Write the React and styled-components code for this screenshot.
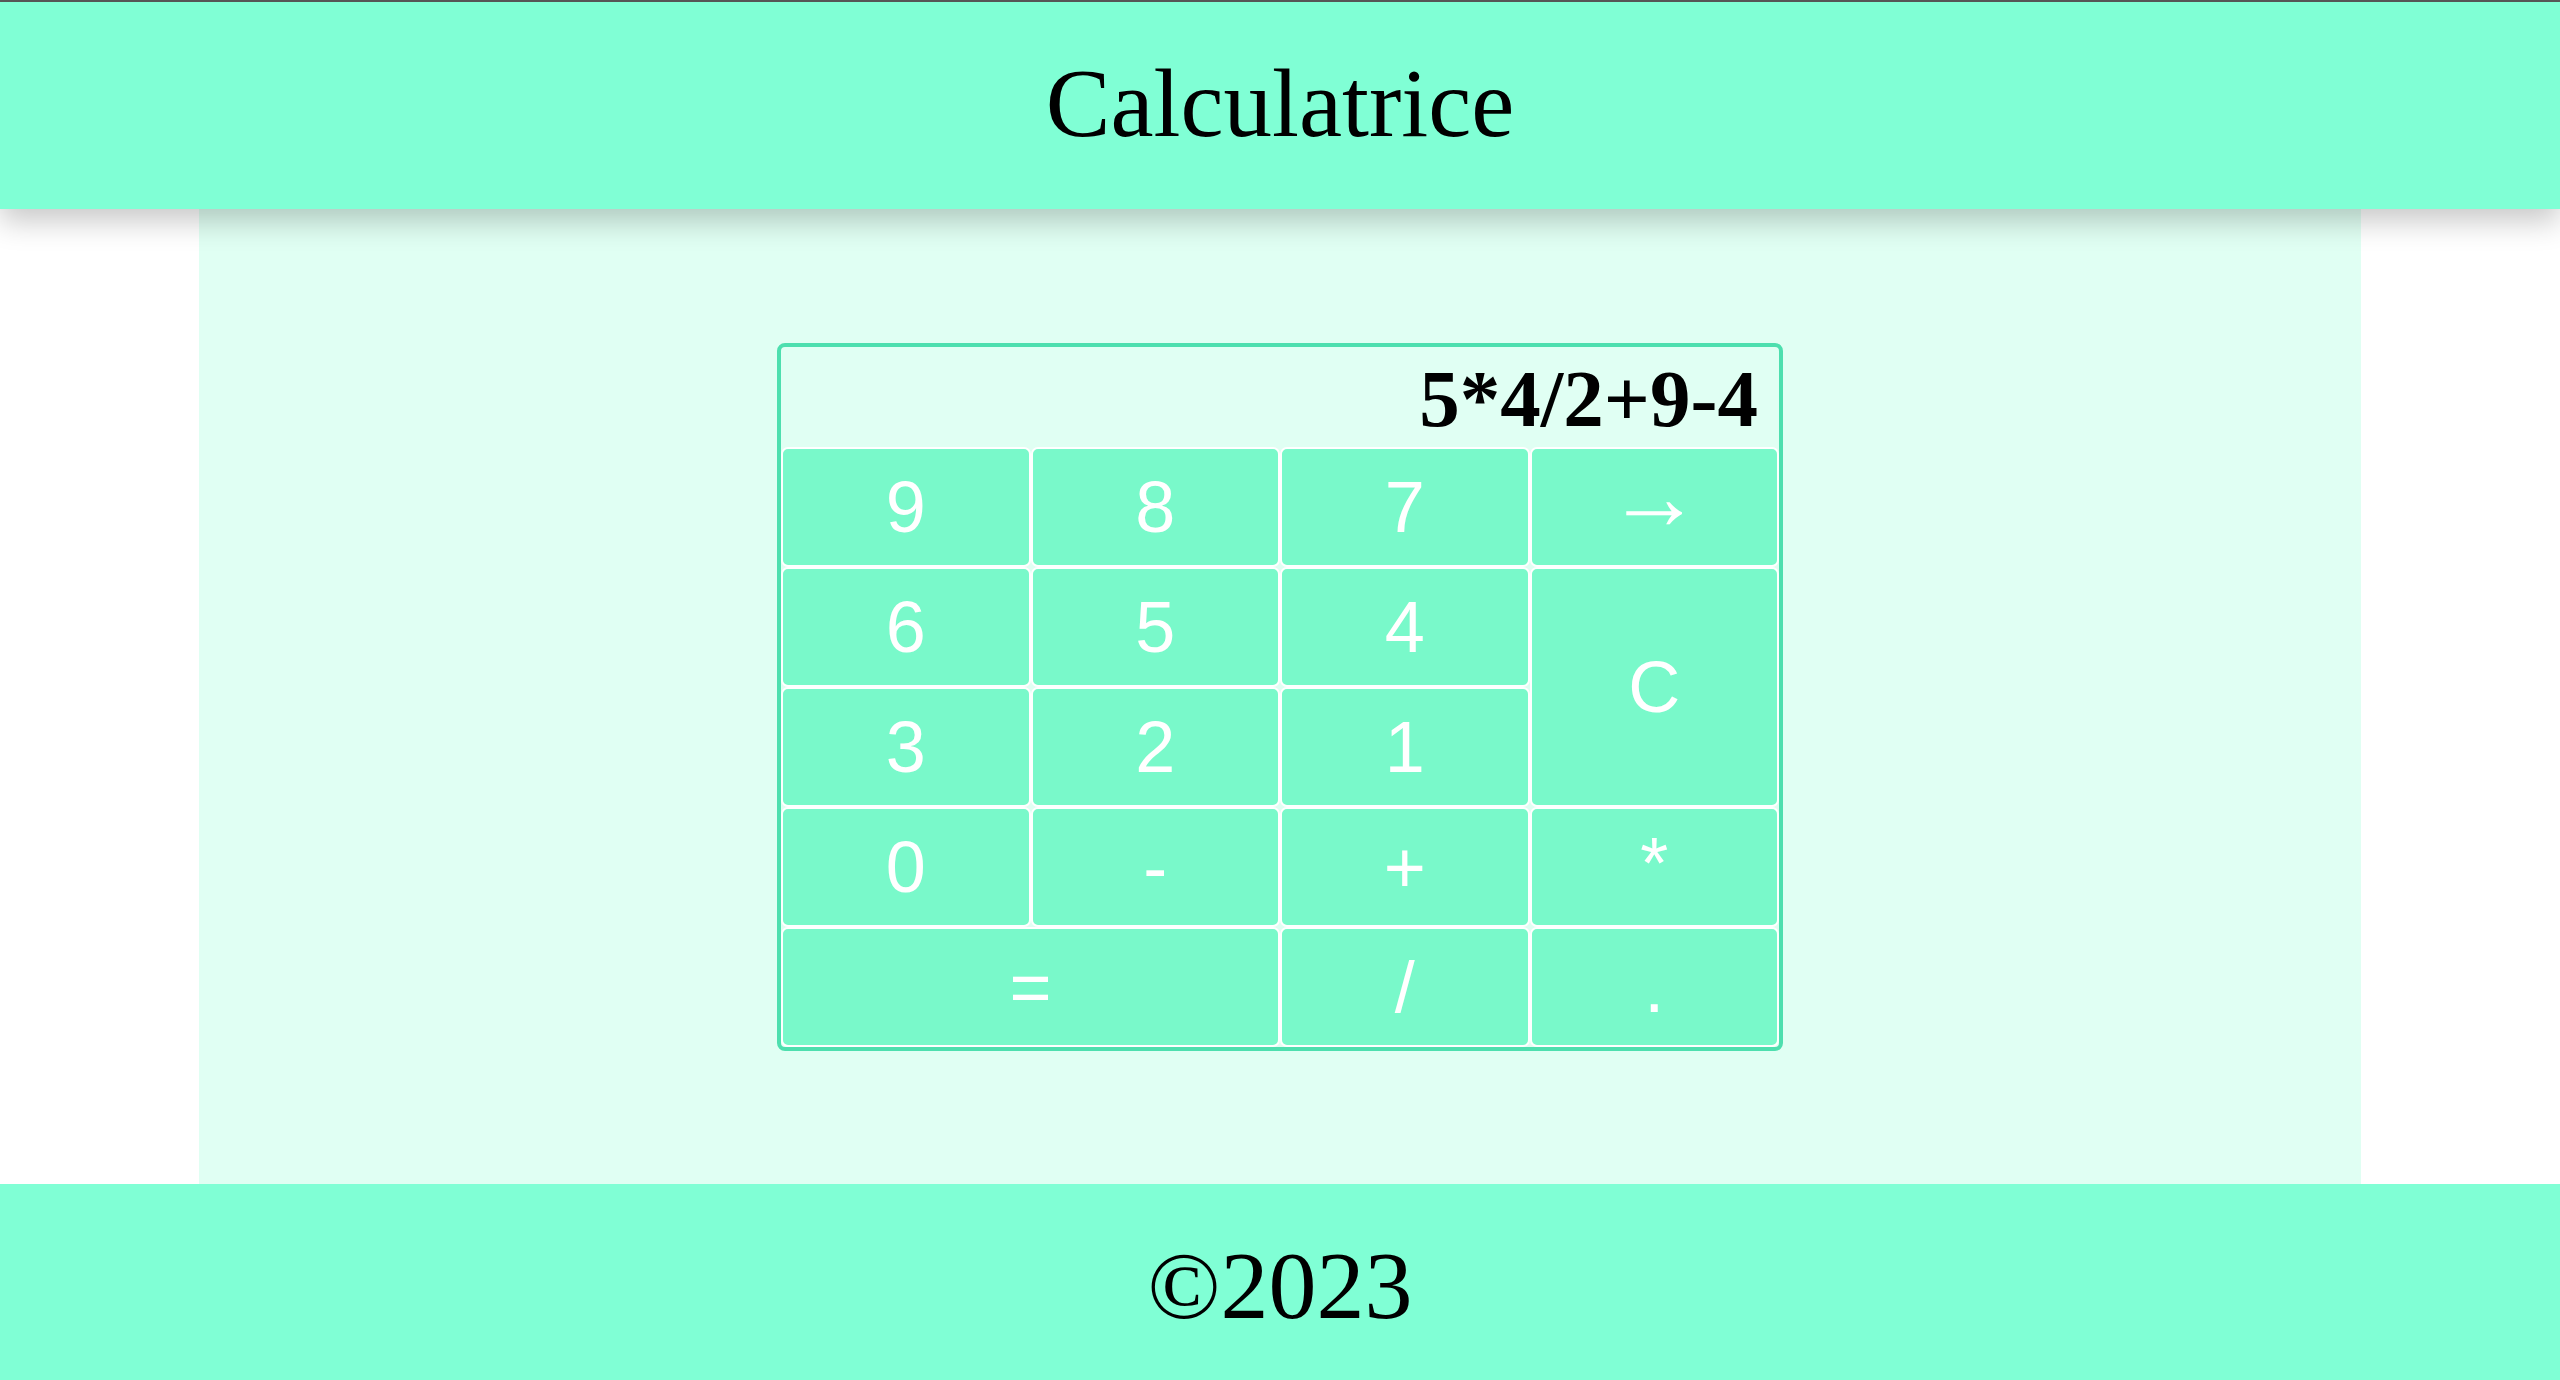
import React from "react";
import styled, { createGlobalStyle } from "styled-components";

const Global = createGlobalStyle`
  html, body { margin: 0; padding: 0; background: #ffffff; }
  body { font-family: "Liberation Serif", "Times New Roman", serif; }
  * { box-sizing: border-box; }
`;

const Page = styled.div`
  display: flex;
  flex-direction: column;
  min-height: 1380px;
  border-top: 2px solid #5a5a5a;
`;

const Header = styled.header`
  position: relative;
  z-index: 2;
  height: 207px;
  background: #80ffd5;
  display: flex;
  align-items: center;
  justify-content: center;
  box-shadow: 0 12px 28px rgba(0, 0, 0, 0.22);
`;

const Title = styled.h1`
  margin: 0;
  font-family: "Liberation Serif", "Times New Roman", serif;
  font-weight: 400;
  font-size: 97px;
  line-height: 1;
  color: #000;
  transform: translateY(-2px);
`;

const Main = styled.main`
  flex: 1;
  width: 2162px;
  margin: 0 auto;
  background: #e0fff3;
  display: flex;
  justify-content: center;
  align-items: flex-start;
  padding-top: 134px;
`;

const Calculator = styled.div`
  width: 1006px;
  border: 4px solid #4ddfae;
  border-radius: 8px;
  background: #e0fff3;
  overflow: hidden;
`;

const Display = styled.div`
  height: 100px;
  display: flex;
  align-items: center;
  justify-content: flex-end;
  padding: 4px 21px 0 0;
  font-family: "Liberation Serif", "Times New Roman", serif;
  font-weight: 700;
  font-size: 81px;
  color: #000;
`;

const Keys = styled.div`
  display: grid;
  grid-template-columns: repeat(4, 1fr);
  grid-template-rows: repeat(5, 120px);
`;

const Key = styled.button`
  grid-column: ${(p) => (p.$wide ? "span 2" : "auto")};
  grid-row: ${(p) => (p.$tall ? "span 2" : "auto")};
  margin: 0;
  padding: 0 0 ${(p) => p.$lift || 0}px 0;
  border: 2px solid #ffffff;
  border-radius: 7px;
  background: #79f9ca;
  color: #ffffff;
  font-family: "Liberation Sans", Arial, Helvetica, sans-serif;
  font-size: ${(p) => p.$size || 72}px;
  line-height: 1;
  display: flex;
  align-items: center;
  justify-content: center;
  cursor: pointer;
`;

const Footer = styled.footer`
  height: 196px;
  background: #80ffd5;
  display: flex;
  align-items: center;
  justify-content: center;
`;

const Copy = styled.p`
  margin: 0;
  font-family: "Liberation Serif", "Times New Roman", serif;
  font-size: 96px;
  line-height: 1;
  color: #000;
  transform: translateY(4px);
`;

const keys = [
  { l: "9" }, { l: "8" }, { l: "7" }, { l: "→", size: 94, lift: 20 },
  { l: "6" }, { l: "5" }, { l: "4" }, { l: "C", tall: true },
  { l: "3" }, { l: "2" }, { l: "1" },
  { l: "0" }, { l: "-" }, { l: "+" }, { l: "*", lift: 8 },
  { l: "=", wide: true }, { l: "/" }, { l: "." },
];

export default function App() {
  return (
    <>
      <Global />
      <Page>
        <Header>
          <Title>Calculatrice</Title>
        </Header>
        <Main>
          <Calculator>
            <Display>5*4/2+9-4</Display>
            <Keys>
              {keys.map((k, i) => (
                <Key key={i} $wide={k.wide} $tall={k.tall} $size={k.size} $lift={k.lift}>
                  {k.l}
                </Key>
              ))}
            </Keys>
          </Calculator>
        </Main>
        <Footer>
          <Copy>©2023</Copy>
        </Footer>
      </Page>
    </>
  );
}
